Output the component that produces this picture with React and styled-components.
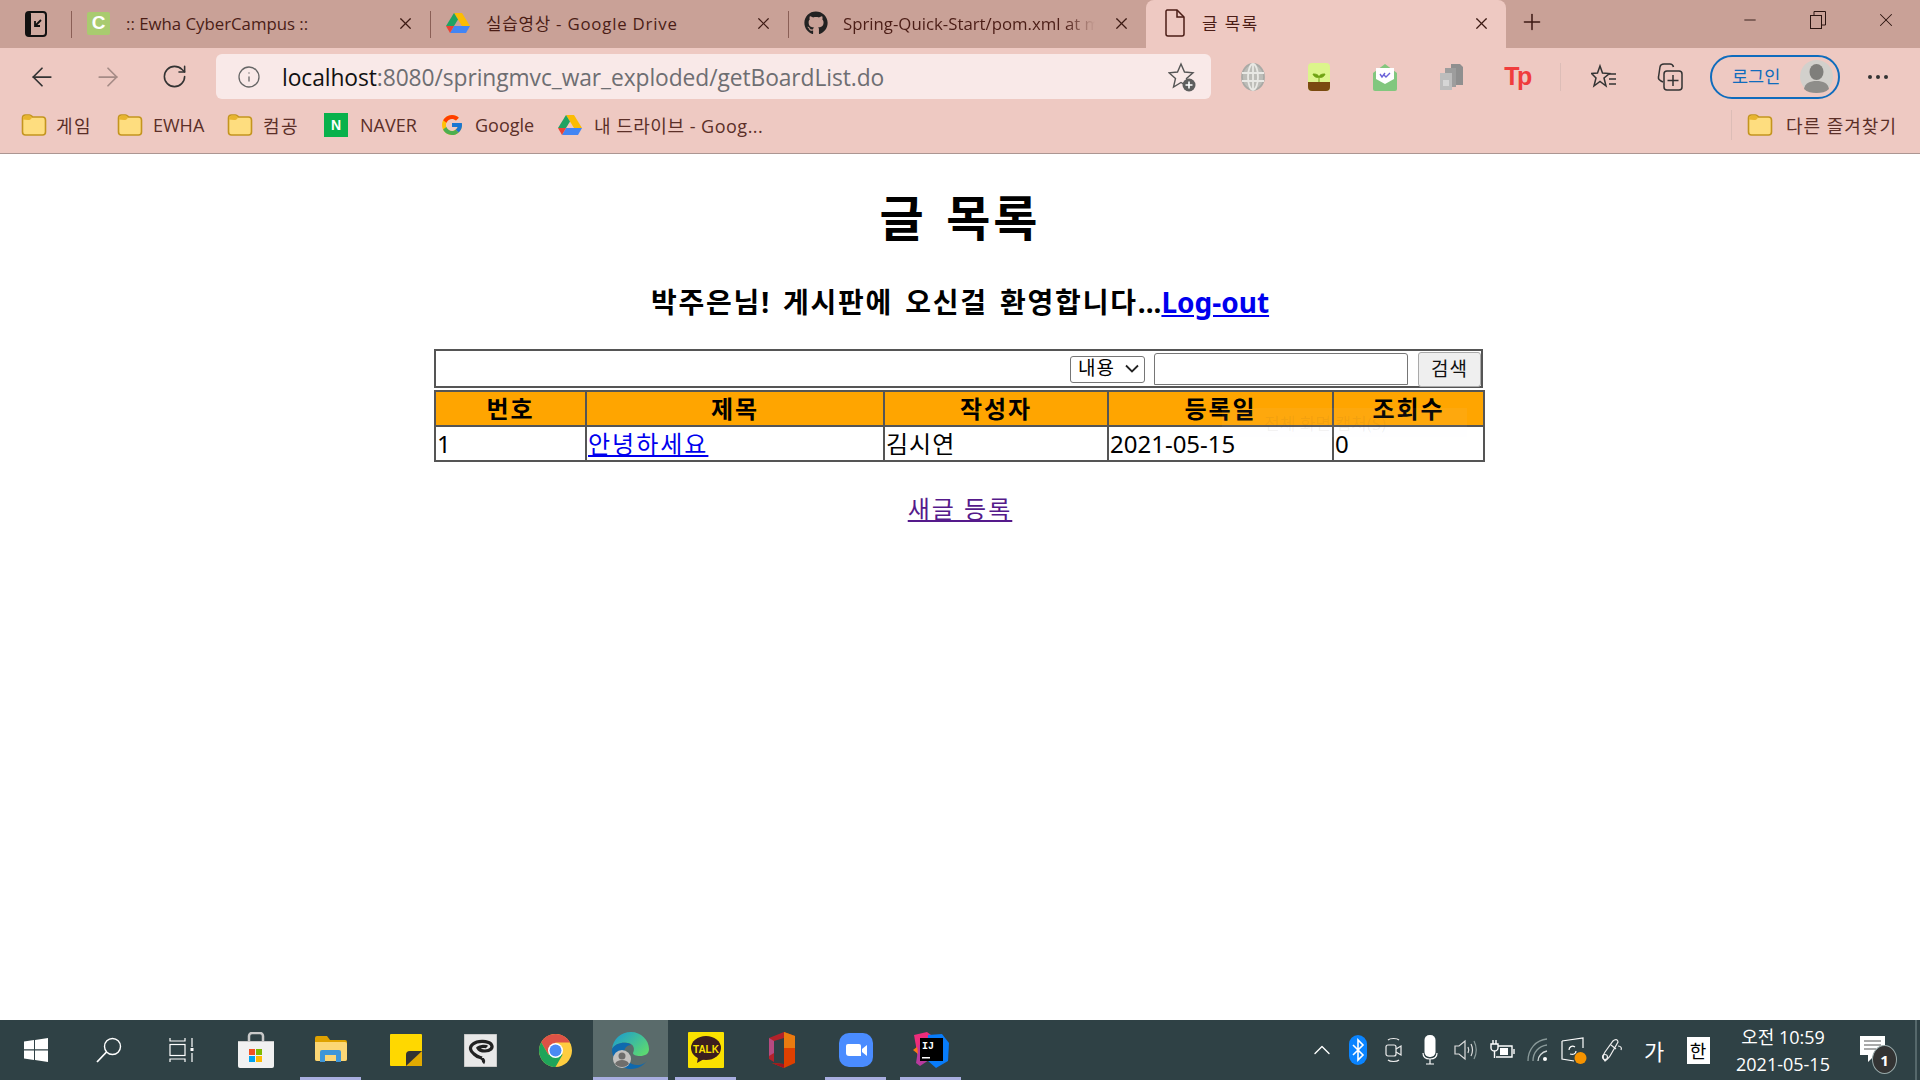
import styled, { createGlobalStyle } from 'styled-components'
import { FaGithub } from 'react-icons/fa'
import { FcGoogle } from 'react-icons/fc'
import { ArrowLeft, ArrowRight, RotateCw, Info, X, Plus, Minus, ChevronUp } from 'lucide-react'

const UI_FONT = `'Open Sans', 'Noto Sans CJK KR', sans-serif`
const PAGE_FONT = `'Noto Sans', 'Noto Sans CJK KR', sans-serif`

const GlobalStyle = createGlobalStyle`
  html, body { margin: 0; padding: 0; background: #fff; }
  #root { height: 1080px; }
`

const Screen = styled.div`
  display: flex;
  flex-direction: column;
  width: 1920px;
  height: 1080px;
  overflow: hidden;
  font-family: ${UI_FONT};
`

const TabStrip = styled.div`
  display: flex;
  align-items: stretch;
  height: 48px;
  background: #c9a197;
  color: #4b1d16;
`

const AppMenu = styled.div`
  display: flex;
  align-items: center;
  justify-content: center;
  width: 71px;
`

const Tab = styled.div`
  position: relative;
  display: flex;
  align-items: center;
  width: ${(p) => p.$width}px;
  padding: 0 15px 2px ${(p) => (p.$active ? 19 : 16)}px;
  box-sizing: border-box;
  gap: ${(p) => (p.$active ? 17 : 16)}px;
  font-size: 16.800px;
  color: #4b1d16;
  background: ${(p) => (p.$active ? '#eec9c2' : 'transparent')};
  border-radius: ${(p) => (p.$active ? '8px 8px 0 0' : '0')};
  &::before {
    content: '';
    display: ${(p) => (p.$active ? 'none' : 'block')};
    position: absolute;
    left: 0;
    top: 11px;
    bottom: 10px;
    width: 1px;
    background: #8a5f56;
  }
`

const TabTitle = styled.span`
  flex: 1;
  overflow: hidden;
  white-space: nowrap;
  letter-spacing: ${(p) => p.$spacing || 0}px;
  ${(p) => p.$fade && 'mask-image: linear-gradient(to right, #000 88%, transparent 100%);'}
`

const TabClose = styled.span`
  display: flex;
  width: 20px;
  justify-content: center;
  color: #3d1a14;
`

const NewTab = styled.div`
  display: flex;
  align-items: center;
  justify-content: center;
  width: 52px;
  color: #3d1a14;
  padding-bottom: 4px;
`

const WindowButtons = styled.div`
  display: flex;
  margin-left: auto;
`

const WindowButton = styled.div`
  display: flex;
  align-items: center;
  justify-content: center;
  width: 68px;
  padding-bottom: 8px;
  color: #2a1410;
`

const Toolbar = styled.div`
  display: flex;
  align-items: center;
  height: 56px;
  padding: 6px 0 5px 9px;
  box-sizing: border-box;
  background: #eec9c2;
`

const NavButton = styled.div`
  display: flex;
  align-items: center;
  justify-content: center;
  width: 66px;
  color: ${(p) => (p.$dim ? '#a58b86' : '#333')};
`

const AddressBar = styled.div`
  display: flex;
  align-items: center;
  width: 995px;
  height: 45px;
  margin-left: 9px;
  padding: 0 15px 0 21px;
  box-sizing: border-box;
  background: #f9e9e8;
  border-radius: 6px;
  color: #666;
`

const Url = styled.div`
  flex: 1;
  margin-left: 21px;
  padding-top: 1px;
  font-size: 22.800px;
  letter-spacing: -0.08px;
  color: #6e6e72;
  white-space: nowrap;
  b {
    font-weight: 400;
    color: #111;
  }
`

const ExtensionSlot = styled.div`
  display: flex;
  align-items: center;
  justify-content: center;
  width: 66px;
`

const ExtensionRow = styled.div`
  display: flex;
  align-items: center;
  margin-left: 9px;
`

const ToolbarDivider = styled.div`
  width: 1px;
  height: 28px;
  margin: 0 10px;
  background: #dcbdb7;
`

const ProfilePill = styled.div`
  display: flex;
  align-items: center;
  justify-content: space-between;
  width: 130px;
  height: 44px;
  margin-left: 7px;
  padding: 0 5px 3px 20px;
  box-sizing: border-box;
  border: 2px solid #0f6cbd;
  border-radius: 22px;
  color: #0f6cbd;
  font-size: 17.500px;
  svg {
    margin-top: 3px;
  }
`

const Tp = styled.span`
  font-family: 'Liberation Sans', sans-serif;
  font-weight: 700;
  font-size: 25px;
  letter-spacing: -2.500px;
  color: #f03c3c;
`

const Dots = styled.div`
  display: flex;
  gap: 4px;
  margin-left: 28px;
  span {
    width: 4px;
    height: 4px;
    border-radius: 50%;
    background: #333;
  }
`

const BookmarkBar = styled.div`
  display: flex;
  align-items: center;
  height: 50px;
  padding: 0 23px 7px 21px;
  box-sizing: border-box;
  background: #eec9c2;
  border-bottom: 1px solid #ac9692;
  color: #5b2f28;
  font-size: 18px;
`

const Bookmark = styled.div`
  display: flex;
  align-items: center;
  flex: none;
  width: ${(p) => p.$width}px;
  gap: ${(p) => p.$gap}px;
  white-space: nowrap;
  letter-spacing: ${(p) => p.$spacing || 0}px;
`

const SquareMark = styled.span`
  display: flex;
  align-items: center;
  justify-content: center;
  width: ${(p) => p.$size || 24}px;
  height: ${(p) => p.$size || 24}px;
  background: ${(p) => p.$bg};
  color: #fff;
  font-family: 'Liberation Sans', sans-serif;
  font-weight: 700;
  font-size: ${(p) => p.$font || 14}px;
  border-radius: ${(p) => p.$radius || 0}px;
`

const BookmarkSpacer = styled.div`
  flex: 1;
`

const OtherBookmarks = styled.div`
  display: flex;
  align-items: center;
  gap: 13px;
  height: 30px;
  padding-left: 15px;
  border-left: 1px solid #dcbdb7;
  letter-spacing: 1px;
`

const Main = styled.main`
  flex: 1;
  display: flex;
  flex-direction: column;
  align-items: center;
  background: #fff;
  font-family: ${PAGE_FONT};
  color: #000;
`

const Title = styled.h1`
  margin: 27px 0 0;
  height: 74px;
  line-height: 74px;
  font-size: 48px;
  font-weight: 700;
  letter-spacing: 3px;
  word-spacing: 4px;
`

const Welcome = styled.h3`
  margin: 25px 0 0;
  height: 44px;
  line-height: 44px;
  font-size: 28px;
  font-weight: 700;
  a {
    color: #0000ee;
  }
`

const Greeting = styled.span`
  letter-spacing: 1.800px;
  word-spacing: 3px;
`

const TableWrap = styled.div`
  position: relative;
  width: 1049px;
  margin: 25px 3px 0 0;
`

const SearchBar = styled.div`
  display: flex;
  align-items: center;
  justify-content: flex-end;
  height: 39px;
  box-sizing: border-box;
  padding: 1px 0 0;
  border: 2px solid #555;
`

const SearchSelect = styled.div`
  display: flex;
  align-items: center;
  justify-content: space-between;
  width: 75px;
  height: 27px;
  margin-top: 1px;
  padding: 0 5px 2px 7px;
  box-sizing: border-box;
  border: 1px solid #767676;
  border-radius: 3px;
  font-size: 19px;
  letter-spacing: 1px;
  line-height: 1;
`

const SearchInput = styled.input`
  width: 254px;
  height: 32px;
  margin-left: 9px;
  padding: 0;
  box-sizing: border-box;
  border: 1px solid #767676;
  border-radius: 3px 3px 0 0;
`

const SearchButton = styled.button`
  width: 63px;
  height: 35px;
  margin-left: 10px;
  padding: 0 0 2px;
  border: 1px solid #aaa;
  border-radius: 3px;
  background: #efefef;
  font-family: ${PAGE_FONT};
  font-size: 19px;
  letter-spacing: 1px;
  color: #111;
`

const BoardTable = styled.table`
  width: 1049px;
  margin-top: 2px;
  table-layout: fixed;
  border-collapse: collapse;
  font-size: 24px;
`

const Th = styled.th`
  height: 35px;
  padding: 0;
  box-sizing: border-box;
  width: ${(p) => p.$width}px;
  background: orange;
  border: 2px solid #555;
  font-size: 24px;
  letter-spacing: 2px;
  line-height: 1;
  font-weight: 700;
`

const Td = styled.td`
  height: 35px;
  padding: 0 1px;
  box-sizing: border-box;
  border: 2px solid #555;
  line-height: 1;
  letter-spacing: ${(p) => p.$spacing || 0}px;
  a {
    color: #0000ee;
  }
`

const GhostTooltip = styled.div`
  position: absolute;
  left: 788px;
  top: 59px;
  width: 245px;
  height: 29px;
  padding-left: 42px;
  box-sizing: border-box;
  display: flex;
  align-items: center;
  background: rgba(230, 238, 255, 0.05);
  color: rgba(90, 70, 50, 0.07);
  font-size: 17px;
`

const NewPost = styled.a`
  margin-top: 27px;
  font-size: 24px;
  letter-spacing: 2px;
  line-height: 40px;
  color: #551a8b;
`

const Taskbar = styled.footer`
  display: flex;
  align-items: center;
  height: 60px;
  background: #2f4145;
  color: #fff;
`

const TaskSlot = styled.div`
  position: relative;
  display: flex;
  align-items: center;
  justify-content: center;
  flex: none;
  width: ${(p) => p.$width || 75}px;
  height: 60px;
  background: ${(p) => (p.$active ? '#5a6b6b' : 'transparent')};
  &::after {
    content: '';
    display: ${(p) => (p.$open ? 'block' : 'none')};
    position: absolute;
    left: ${(p) => (p.$active ? 0 : 7)}px;
    right: ${(p) => (p.$active ? 0 : 7)}px;
    bottom: 0;
    height: 3px;
    background: #a8aee0;
  }
`

const Tray = styled.div`
  display: flex;
  align-items: center;
  height: 60px;
  margin-left: auto;
`

const TrayIcon = styled.div`
  display: flex;
  align-items: center;
  justify-content: center;
  width: ${(p) => p.$width || 36}px;
  font-size: ${(p) => p.$font || 20}px;
`

const HanBox = styled.span`
  display: flex;
  align-items: center;
  justify-content: center;
  width: 23px;
  height: 27px;
  background: #fff;
  color: #000;
  font-size: 18px;
`

const Clock = styled.div`
  display: flex;
  flex-direction: column;
  align-items: center;
  gap: 5px;
  width: 126px;
  font-size: 18px;
  line-height: 22px;
`

const NotifyCount = styled.span`
  position: absolute;
  right: -12px;
  bottom: -10px;
  display: flex;
  align-items: center;
  justify-content: center;
  width: 23px;
  height: 27px;
  border-radius: 50%;
  border: 1px solid #9aa;
  background: #333;
  font-size: 15px;
  font-weight: 700;
`

const NotifyIcon = styled.div`
  position: relative;
  display: flex;
  margin: 0 30px 0 14px;
`

const EdgeLine = styled.div`
  width: 2px;
  height: 60px;
  margin-right: 3px;
  background: #56686b;
`

const FolderIcon = () => (
  <svg width="26" height="24" viewBox="0 0 26 24">
    <path d="M1.500 5a3 3 0 0 1 3-3h4c1.500 0 2 1 3 2h10a3 3 0 0 1 3 3v12a3 3 0 0 1-3 3h-17a3 3 0 0 1-3-3z" fill="#fedd7f" stroke="#c4951f" strokeWidth="1.600" />
    <path d="M2 6.500c0-2 1-4 3-4h3c2 0 2 1 3 2-1 2-2 2.500-4 2.500z" fill="#e8b52e" />
  </svg>
)

const DriveIcon = () => (
  <svg width="24" height="22" viewBox="0 0 24 22">
    <path d="M8 1h8l8 13h-8z" fill="#fbbc04" />
    <path d="M4 21l4-7h16l-4 7z" fill="#4285f4" />
    <path d="M0 14h8l-4 7z" fill="#ea4335" />
    <path d="M8 1l4 6.500L8 14H0z" fill="#1ea362" />
  </svg>
)

const PageIcon = () => (
  <svg width="20" height="28" viewBox="0 0 20 28" fill="none" stroke="#4b1d16" strokeWidth="1.500">
    <path d="M2 1h10l7 7v17a2 2 0 0 1-2 2H3a2 2 0 0 1-2-2V2z" />
    <path d="M12 1v7h7" />
  </svg>
)

const BookIcon = () => (
  <svg width="22" height="26" viewBox="0 0 22 26">
    <rect x="1" y="1" width="20" height="24" rx="3" fill="#cfa99f" stroke="#111" strokeWidth="2" />
    <rect x="1" y="1" width="5" height="24" rx="2" fill="#111" />
    <path d="M16 9l-5 5M10 10v5h5" stroke="#111" strokeWidth="1.800" fill="none" />
  </svg>
)

const RestoreIcon = () => (
  <svg width="16" height="18" viewBox="0 0 16 18" fill="none" stroke="#2a1410" strokeWidth="1">
    <rect x="0.500" y="4.500" width="11" height="13" />
    <path d="M4 4V.500h11.500V14H12" />
  </svg>
)

const StarPlus = () => (
  <svg width="28" height="30" viewBox="0 0 28 30" fill="none">
    <path d="M13 2l3.500 8 8.500.8-6.500 5.700 2 8.500L13 20.500 5.500 25l2-8.500L1 10.800l8.500-.8z" stroke="#555" strokeWidth="1.400" />
    <circle cx="21" cy="23" r="6.500" fill="#5e5e5e" />
    <path d="M21 19.500v7M17.500 23h7" stroke="#fff" strokeWidth="1.600" />
  </svg>
)

const Globe = () => (
  <svg width="24" height="28" viewBox="0 0 24 28" fill="none" stroke="#a9aaa6" strokeWidth="1.800">
    <ellipse cx="12" cy="14" rx="11" ry="13" fill="#bdbdb8" />
    <ellipse cx="12" cy="14" rx="5" ry="13" stroke="#e8e8e4" />
    <path d="M12 1v26M1 10h22M1 18h22" stroke="#e8e8e4" />
  </svg>
)

const Seedling = () => (
  <svg width="22" height="28" viewBox="0 0 22 28">
    <rect width="22" height="28" rx="4" fill="#dcf58b" />
    <path d="M0 19h22v5a4 4 0 0 1-4 4H4a4 4 0 0 1-4-4z" fill="#7a4a10" />
    <path d="M11 19v-6M11 14c-1-3-4-3-6-3 1 3 4 4 6 3zM11 14c1-3 4-3 6-3-1 3-4 4-6 3z" fill="#6ea212" stroke="#6ea212" />
  </svg>
)

const MailCheck = () => (
  <svg width="24" height="28" viewBox="0 0 24 28">
    <path d="M0 10L12 1l12 9v16a2 2 0 0 1-2 2H2a2 2 0 0 1-2-2z" fill="#82c77e" />
    <path d="M3 5h18v11l-9 5-9-5z" fill="#fff" />
    <path d="M7 11l2 3 3-4M11 12l2 2 4-4" stroke="#6a62d8" strokeWidth="1.400" fill="none" />
  </svg>
)

const CopyStack = () => (
  <svg width="24" height="28" viewBox="0 0 24 28">
    <path d="M12 1h9l3 3v18H12z" fill="#8f8f8f" />
    <path d="M6 5h11v19H6z" fill="#9d9d9d" />
    <path d="M1 10h12v17H1z" fill="#bdbdbd" />
    <path d="M4 17h6v6H4z" fill="#d6d6d6" />
  </svg>
)

const StarList = () => (
  <svg width="26" height="28" viewBox="0 0 26 28" fill="none" stroke="#333" strokeWidth="1.500">
    <path d="M9 3l2.500 7 7 .5-5.500 4.500 2 8-6-4.500L3 23l2-8-4.500-4.500 6-.5z" />
    <path d="M18 11h7M18 16h7M18 21h7" />
  </svg>
)

const Collections = () => (
  <svg width="26" height="28" viewBox="0 0 26 28" fill="none" stroke="#333" strokeWidth="1.500">
    <path d="M6 19l-2-1c-2-1-3-2-2.500-4L3 4c.3-2 1.500-3 4-3h6c2 0 3 1 3.500 3" />
    <rect x="7" y="8" width="18" height="19" rx="3" />
    <path d="M16 12v11M10.500 17.500h11" />
  </svg>
)

const Avatar = () => (
  <svg width="33" height="33" viewBox="0 0 33 33">
    <circle cx="16.500" cy="16.500" r="16.500" fill="#d2d0cc" />
    <ellipse cx="16.500" cy="12" rx="7" ry="8" fill="#7f7e7b" />
    <path d="M4 29c1-6 6-8 12.500-8S28 23 29 29c-3 3-8 4-12.500 4S7 32 4 29z" fill="#8e8d8a" />
  </svg>
)

const WindowsLogo = () => (
  <svg width="24" height="24" viewBox="0 0 24 24" fill="#fff">
    <path d="M0 3.500l10-1.400v9.200H0zM11 2l13-2v11.300H11zM0 12.400h10v9.500L0 20.500zM11 12.400h13V24l-13-2z" />
  </svg>
)

const SearchGlass = () => (
  <svg width="26" height="26" viewBox="0 0 26 26" fill="none" stroke="#fff" strokeWidth="1.400">
    <circle cx="16.500" cy="9.500" r="8" />
    <path d="M10.500 15L1 25" strokeWidth="1.800" />
  </svg>
)

const TaskView = () => (
  <svg width="26" height="24" viewBox="0 0 26 24" fill="none" stroke="#fff" strokeWidth="1.200">
    <path d="M1 0v3h15V0M1 24v-3h15v3" />
    <rect x="1" y="6.500" width="15" height="11" />
    <path d="M23 0v9M23 15v9" />
    <rect x="21.500" y="10" width="3" height="3" fill="#fff" stroke="none" />
  </svg>
)

const StoreBag = () => (
  <svg width="36" height="36" viewBox="0 0 36 36">
    <path d="M11 9V4a3 3 0 0 1 3-3h8a3 3 0 0 1 3 3v5" fill="none" stroke="#c9c9c9" strokeWidth="2.500" />
    <path d="M0 9h36v25a2 2 0 0 1-2 2H2a2 2 0 0 1-2-2z" fill="#f1f1f1" />
    <path d="M0 9h36v1H0z" fill="#c9c9c9" />
    <rect x="11" y="17" width="6" height="6" fill="#f25022" />
    <rect x="18" y="17" width="6" height="6" fill="#7fba00" />
    <rect x="11" y="24" width="6" height="6" fill="#00a4ef" />
    <rect x="18" y="24" width="6" height="6" fill="#ffb900" />
  </svg>
)

const Explorer = () => (
  <svg width="32" height="28" viewBox="0 0 32 28">
    <path d="M0 2a2 2 0 0 1 2-2h10l3 4h15a2 2 0 0 1 2 2v17a2 2 0 0 1-2 2H2a2 2 0 0 1-2-2z" fill="#dfa100" />
    <path d="M0 6h30a2 2 0 0 1 2 2v15a2 2 0 0 1-2 2H2a2 2 0 0 1-2-2z" fill="#fcd675" />
    <path d="M5 26V16a2 2 0 0 1 2-2h17a2 2 0 0 1 2 2v10h-5v-7H10v7z" fill="#3f96d8" />
  </svg>
)

const StickyNote = () => (
  <svg width="32" height="32" viewBox="0 0 32 32">
    <rect width="32" height="32" rx="1" fill="#ffd800" />
    <path d="M16 32V21a4 4 0 0 1 4-4h12v14a1 1 0 0 1-1 1z" fill="#e2aa00" />
    <path d="M16 32V21a4 4 0 0 1 4-4h12z" fill="#333" />
  </svg>
)

const ClipStudio = () => (
  <svg width="33" height="33" viewBox="0 0 33 33">
    <rect width="33" height="33" fill="#e8e8e8" stroke="#aaa" />
    <path d="M18 24c-3-1-5-1-8-4-4-3-5-7-1-10 5-4 15-3 18 0 3 4-1 7-6 7-3 0-6-1-7-3 2-2 8-2 9-1M17 24c3 1 3 4 2 5" fill="none" stroke="#222" strokeWidth="3.200" />
  </svg>
)

const ChromeIcon = () => (
  <svg width="33" height="33" viewBox="0 0 33 33">
    <circle cx="16.500" cy="16.500" r="16.500" fill="#ffcd40" />
    <path d="M16.500 0A16.500 16.500 0 0 0 2.200 8.300l7.100 12.300 7.200-12.100H31A16.500 16.500 0 0 0 16.500 0z" fill="#de5246" />
    <path d="M2.200 8.300A16.500 16.500 0 0 0 16.500 33l7.200-12.400-14.400 0z" fill="#1fa45a" />
    <circle cx="16.500" cy="16.500" r="7.500" fill="#fff" />
    <circle cx="16.500" cy="16.500" r="6" fill="#4a8af4" />
  </svg>
)

const EdgeIcon = () => (
  <svg width="37" height="37" viewBox="0 0 37 37">
    <defs>
      <linearGradient id="edgeTop" x1="0" y1="0" x2="1" y2="0.700">
        <stop offset="0" stopColor="#1798d6" />
        <stop offset="1" stopColor="#5bd773" />
      </linearGradient>
    </defs>
    <path d="M0 17C1 7 9 0 19 0c10 0 18 8 18 17 0 5-4 7-9 7-4 0-7-1-7-3 2-4 1-9-5-10C9 10 3 12 0 17z" fill="url(#edgeTop)" />
    <path d="M0 17c3-5 9-7 15-6 2 0 3 1 4 2-4 0-7 3-7 8 0 6 6 12 13 12 5 0 9-2 11-6-3 6-10 10-17 10C8 37 0 28 0 17z" fill="#0f69ae" />
    <circle cx="10" cy="27" r="9" fill="#c4c2bf" />
    <circle cx="10" cy="24" r="3.500" fill="#6f6e6c" />
    <path d="M3 32c1-3 4-4 7-4s6 1 7 4c-2 2-4 3-7 3s-5-1-7-3z" fill="#6f6e6c" />
  </svg>
)

const KakaoTalk = () => (
  <svg width="36" height="36" viewBox="0 0 36 36">
    <rect width="36" height="36" rx="1" fill="#fae100" />
    <ellipse cx="18" cy="16" rx="15" ry="12" fill="#3c1e1e" />
    <path d="M10 25l-1 6 7-4z" fill="#3c1e1e" />
    <text x="18" y="20.500" textAnchor="middle" fontFamily="Liberation Sans" fontWeight="700" fontSize="10" fill="#fae100">TALK</text>
  </svg>
)

const OfficeIcon = () => (
  <svg width="28" height="36" viewBox="0 0 28 36">
    <path d="M17 0L2 6v21l5 3V9l10-3z" fill="#b3222a" />
    <path d="M17 0l11 4v27l-11 5-12-5 12 1z" fill="#de4000" />
    <path d="M17 0l11 4v12H17z" fill="#ea7b10" />
    <path d="M5 31l12 5V32z" fill="#a01220" />
    <path d="M2 6l5 3v12l-5 3z" fill="#b74a80" />
  </svg>
)

const ZoomIcon = () => (
  <svg width="34" height="34" viewBox="0 0 34 34">
    <rect width="34" height="34" rx="10" fill="#4a8cff" />
    <path d="M7 13a2 2 0 0 1 2-2h11a2 2 0 0 1 2 2v10H10a3 3 0 0 1-3-3z" fill="#fff" />
    <path d="M23 16l5-4v11l-5-4z" fill="#fff" />
  </svg>
)

const IntelliJ = () => (
  <svg width="36" height="36" viewBox="0 0 36 36">
    <path d="M1 3l13-3 8 6-16 25z" fill="#ee2c7b" />
    <path d="M15 3l14-1 7 9-1 18-12 7-9-8z" fill="#087cfa" />
    <path d="M3 31l3-19 10 16-9 6z" fill="#b83a9e" />
    <path d="M0 18l4-3 1 7z" fill="#f97a12" />
    <rect x="7" y="6" width="23" height="23" fill="#000" />
    <text x="9" y="17" fontFamily="Liberation Mono" fontWeight="700" fontSize="10" fill="#fff">IJ</text>
    <rect x="9" y="25" width="8" height="1.500" fill="#fff" />
  </svg>
)

const BluetoothBadge = () => (
  <svg width="18" height="30" viewBox="0 0 18 30">
    <rect width="18" height="30" rx="9" fill="#0a84ff" />
    <path d="M4 10l10 10-5 5V5l5 5-10 10" fill="none" stroke="#fff" strokeWidth="1.600" />
  </svg>
)

const CameraTray = () => (
  <svg width="18" height="28" viewBox="0 0 18 28" fill="none" stroke="#eee" strokeWidth="1.200">
    <path d="M3 4c2-2 9-2 11 0M3 24c2 2 9 2 11 0" />
    <rect x="1" y="9" width="10" height="11" rx="2" />
    <path d="M11 13l5-3v9l-5-3" />
  </svg>
)

const MicTray = () => (
  <svg width="16" height="30" viewBox="0 0 16 30" fill="none" stroke="#fff" strokeWidth="1.200">
    <rect x="2.500" y="0" width="11" height="22" rx="5" fill="#fff" stroke="none" />
    <path d="M1 18c0 4 3 6 7 6s7-2 7-6M8 24v5M4 29h8" />
  </svg>
)

const VolumeTray = () => (
  <svg width="24" height="22" viewBox="0 0 24 22" fill="none" stroke="#ddd" strokeWidth="1.200">
    <path d="M1 7h4l6-5v18l-6-5H1z" />
    <path d="M14 8c1 2 1 4 0 6M17 5c2 4 2 8 0 12" />
    <path d="M20 2c3 6 3 12 0 18" stroke="#8a9a9a" />
  </svg>
)

const BatteryTray = () => (
  <svg width="26" height="20" viewBox="0 0 26 20" fill="none" stroke="#fff" strokeWidth="1.400">
    <path d="M4 0v4M7 0v4M2 4h7v4c0 2-2 3-3.500 3S2 10 2 8zM5.500 11v7" />
    <path d="M9 6h14v11H7" />
    <rect x="11" y="8" width="8" height="7" fill="#fff" stroke="none" />
    <path d="M25 9v5" />
  </svg>
)

const WifiTray = () => (
  <svg width="22" height="24" viewBox="0 0 22 24" fill="none" stroke="#8a9a9a" strokeWidth="1.300">
    <path d="M1 23C1 11 9 2 20 1M6 23c0-9 6-15 14-16" />
    <path d="M11 23c0-5 4-9 9-10" stroke="#cfd6d6" />
    <circle cx="18" cy="21" r="2" fill="#fff" stroke="none" />
  </svg>
)

const UpdateTray = () => (
  <svg width="26" height="28" viewBox="0 0 26 28" fill="none" stroke="#fff" strokeWidth="1.200">
    <path d="M1 5l21-3v10M1 5v18l12 2" />
    <path d="M8 14c0-3 3-5 6-3M15 15c0 3-3 4-6 3" />
    <circle cx="19.500" cy="22" r="6" fill="#f69300" stroke="none" />
  </svg>
)

const PenTray = () => (
  <svg width="22" height="26" viewBox="0 0 22 26" fill="none" stroke="#eee" strokeWidth="1.200">
    <path d="M4 24c-3-3-2-6 0-9l8-11c2-2 5-2 5 1l-8 14c-1 2-3 3-5 5zM10 8l5 4" />
    <path d="M17 9c3 0 4 2 3 4" />
    <circle cx="4" cy="20" r="2.500" />
  </svg>
)

const NotifyBubble = () => (
  <svg width="25" height="28" viewBox="0 0 25 28">
    <path d="M0 0h25v19H15l-7 7v-7H0z" fill="#fff" />
    <path d="M4 5h17M4 9h17M4 13h12" stroke="#555" strokeWidth="1.200" />
  </svg>
)

const Chevron = () => (
  <svg width="14" height="9" viewBox="0 0 14 9" fill="none" stroke="#222" strokeWidth="1.800">
    <path d="M1 1.500l6 6 6-6" />
  </svg>
)

const tabs = [
  { width: 359, title: ':: Ewha CyberCampus ::', icon: <SquareMark $size={23} $font={19} $bg="#a9cb6f" $radius={2}>C</SquareMark> },
  { width: 358, title: '실습영상 - Google Drive', spacing: 0.8, icon: <DriveIcon /> },
  { width: 358, title: 'Spring-Quick-Start/pom.xml at master', fade: true, icon: <FaGithub size={24} color="#222" style={{ marginRight: -1 }} /> },
]

const bookmarks = [
  { label: '게임', icon: <FolderIcon />, width: 96, gap: 9, spacing: 1.500 },
  { label: 'EWHA', icon: <FolderIcon />, width: 110, gap: 10 },
  { label: '컴공', icon: <FolderIcon />, width: 97, gap: 10, spacing: 1.500 },
  { label: 'NAVER', icon: <SquareMark $bg="#08b14b">N</SquareMark>, width: 116, gap: 12 },
  { label: 'Google', icon: <FcGoogle size={24} />, width: 118, gap: 11 },
  { label: '내 드라이브 - Goog...', icon: <DriveIcon />, width: 220, gap: 12, spacing: 0.5 },
]

const apps = [
  { key: 'store', icon: <StoreBag /> },
  { key: 'explorer', icon: <Explorer />, open: true },
  { key: 'sticky', icon: <StickyNote /> },
  { key: 'clip', icon: <ClipStudio /> },
  { key: 'chrome', icon: <ChromeIcon /> },
  { key: 'edge', icon: <EdgeIcon />, open: true, active: true },
  { key: 'kakao', icon: <KakaoTalk />, open: true },
  { key: 'office', icon: <OfficeIcon /> },
  { key: 'zoom', icon: <ZoomIcon />, open: true },
  { key: 'idea', icon: <IntelliJ />, open: true },
]

const columns = [
  { label: '번호', width: 151 },
  { label: '제목', width: 298 },
  { label: '작성자', width: 224 },
  { label: '등록일', width: 225 },
  { label: '조회수', width: 151 },
]

const App = () => {
  return (
    <Screen>
      <GlobalStyle />
      <TabStrip>
        <AppMenu><BookIcon /></AppMenu>
        {tabs.map((tab) => (
          <Tab key={tab.title} $width={tab.width}>
            {tab.icon}
            <TabTitle $fade={tab.fade} $spacing={tab.spacing}>{tab.title}</TabTitle>
            <TabClose><X size={19} strokeWidth={1.500} /></TabClose>
          </Tab>
        ))}
        <Tab $width={360} $active>
          <PageIcon />
          <TabTitle $spacing={1.500}>글 목록</TabTitle>
          <TabClose><X size={19} strokeWidth={1.500} /></TabClose>
        </Tab>
        <NewTab><Plus size={26} strokeWidth={1.400} /></NewTab>
        <WindowButtons>
          <WindowButton><Minus size={18} strokeWidth={1.200} /></WindowButton>
          <WindowButton><RestoreIcon /></WindowButton>
          <WindowButton><X size={22} strokeWidth={1.100} /></WindowButton>
        </WindowButtons>
      </TabStrip>

      <Toolbar>
        <NavButton><ArrowLeft size={30} strokeWidth={1.400} /></NavButton>
        <NavButton $dim><ArrowRight size={30} strokeWidth={1.400} /></NavButton>
        <NavButton><RotateCw size={27} strokeWidth={1.400} /></NavButton>
        <AddressBar>
          <Info size={24} strokeWidth={1.300} />
          <Url><b>localhost</b>:8080/springmvc_war_exploded/getBoardList.do</Url>
          <StarPlus />
        </AddressBar>
        <ExtensionRow>
          <ExtensionSlot><Globe /></ExtensionSlot>
          <ExtensionSlot><Seedling /></ExtensionSlot>
          <ExtensionSlot><MailCheck /></ExtensionSlot>
          <ExtensionSlot><CopyStack /></ExtensionSlot>
          <ExtensionSlot><Tp>Tp</Tp></ExtensionSlot>
        </ExtensionRow>
        <ToolbarDivider />
        <ExtensionSlot><StarList /></ExtensionSlot>
        <ExtensionSlot><Collections /></ExtensionSlot>
        <ProfilePill>
          로그인
          <Avatar />
        </ProfilePill>
        <Dots><span /><span /><span /></Dots>
      </Toolbar>

      <BookmarkBar>
        {bookmarks.map((b) => (
          <Bookmark key={b.label} $width={b.width} $gap={b.gap} $spacing={b.spacing}>
            {b.icon}
            {b.label}
          </Bookmark>
        ))}
        <BookmarkSpacer />
        <OtherBookmarks>
          <FolderIcon />
          다른 즐겨찾기
        </OtherBookmarks>
      </BookmarkBar>

      <Main>
        <Title>글 목록</Title>
        <Welcome><Greeting>박주은님! 게시판에 오신걸 환영합니다</Greeting>...<a href="#logout">Log-out</a></Welcome>
        <TableWrap>
          <SearchBar>
            <SearchSelect>내용 <Chevron /></SearchSelect>
            <SearchInput type="text" />
            <SearchButton>검색</SearchButton>
          </SearchBar>
          <BoardTable>
            <thead>
              <tr>
                {columns.map((c) => (
                  <Th key={c.label} $width={c.width}>{c.label}</Th>
                ))}
              </tr>
            </thead>
            <tbody>
              <tr>
                <Td>1</Td>
                <Td $spacing={2}><a href="#post">안녕하세요</a></Td>
                <Td $spacing={1}>김시연</Td>
                <Td>2021-05-15</Td>
                <Td>0</Td>
              </tr>
            </tbody>
          </BoardTable>
          <GhostTooltip>전체 화면 캡처(S)</GhostTooltip>
        </TableWrap>
        <NewPost href="#new">새글 등록</NewPost>
      </Main>

      <Taskbar>
        <TaskSlot $width={72}><WindowsLogo /></TaskSlot>
        <TaskSlot $width={73}><SearchGlass /></TaskSlot>
        <TaskSlot $width={73}><TaskView /></TaskSlot>
        {apps.map((app) => (
          <TaskSlot key={app.key} $open={app.open} $active={app.active}>
            {app.icon}
          </TaskSlot>
        ))}
        <Tray>
          <TrayIcon><ChevronUp size={28} strokeWidth={1.200} /></TrayIcon>
          <TrayIcon><BluetoothBadge /></TrayIcon>
          <TrayIcon><CameraTray /></TrayIcon>
          <TrayIcon><MicTray /></TrayIcon>
          <TrayIcon><VolumeTray /></TrayIcon>
          <TrayIcon><BatteryTray /></TrayIcon>
          <TrayIcon><WifiTray /></TrayIcon>
          <TrayIcon><UpdateTray /></TrayIcon>
          <TrayIcon $width={40}><PenTray /></TrayIcon>
          <TrayIcon $width={44} $font={22}>가</TrayIcon>
          <TrayIcon $width={44}><HanBox>한</HanBox></TrayIcon>
          <Clock>
            <span>오전 10:59</span>
            <span>2021-05-15</span>
          </Clock>
          <NotifyIcon>
            <NotifyBubble />
            <NotifyCount>1</NotifyCount>
          </NotifyIcon>
          <EdgeLine />
        </Tray>
      </Taskbar>
    </Screen>
  )
}

export default App
